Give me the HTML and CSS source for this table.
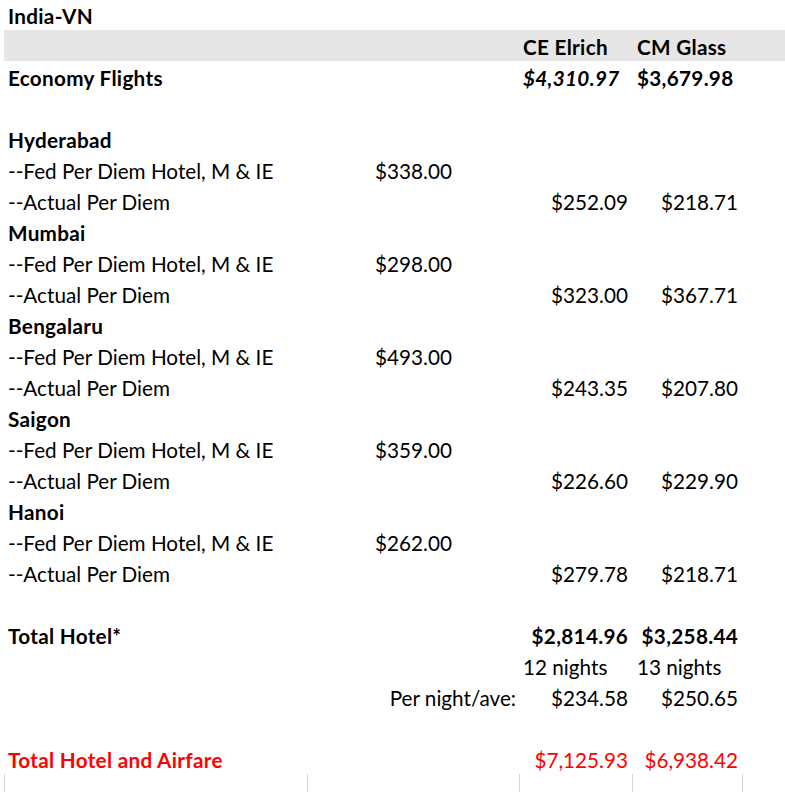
FILE: index.html
```html
<!DOCTYPE html>
<html>
<head>
<meta charset="utf-8">
<link rel="stylesheet" href="styles.css">
</head>
<body>
<div class="sheet">
  <div class="row first"><div class="cell bold">India-VN</div></div>
  <div class="row band"><div class="cell"></div><div class="cell"></div><div class="cell bold">CE Elrich</div><div class="cell bold name2">CM Glass</div></div>
  <div class="row"><div class="cell bold">Economy Flights</div><div class="cell"></div><div class="cell bold italic">$4,310.97</div><div class="cell bold name2">$3,679.98</div></div>
  <div class="row"></div>
  <div class="row"><div class="cell bold">Hyderabad</div></div>
  <div class="row"><div class="cell">--Fed Per Diem Hotel, M &amp; IE</div><div class="cell fed">$338.00</div></div>
  <div class="row"><div class="cell">--Actual Per Diem</div><div class="cell"></div><div class="cell num">$252.09</div><div class="cell num">$218.71</div></div>
  <div class="row"><div class="cell bold">Mumbai</div></div>
  <div class="row"><div class="cell">--Fed Per Diem Hotel, M &amp; IE</div><div class="cell fed">$298.00</div></div>
  <div class="row"><div class="cell">--Actual Per Diem</div><div class="cell"></div><div class="cell num">$323.00</div><div class="cell num">$367.71</div></div>
  <div class="row"><div class="cell bold">Bengalaru</div></div>
  <div class="row"><div class="cell">--Fed Per Diem Hotel, M &amp; IE</div><div class="cell fed">$493.00</div></div>
  <div class="row"><div class="cell">--Actual Per Diem</div><div class="cell"></div><div class="cell num">$243.35</div><div class="cell num">$207.80</div></div>
  <div class="row"><div class="cell bold">Saigon</div></div>
  <div class="row"><div class="cell">--Fed Per Diem Hotel, M &amp; IE</div><div class="cell fed">$359.00</div></div>
  <div class="row"><div class="cell">--Actual Per Diem</div><div class="cell"></div><div class="cell num">$226.60</div><div class="cell num">$229.90</div></div>
  <div class="row"><div class="cell bold">Hanoi</div></div>
  <div class="row"><div class="cell">--Fed Per Diem Hotel, M &amp; IE</div><div class="cell fed">$262.00</div></div>
  <div class="row"><div class="cell">--Actual Per Diem</div><div class="cell"></div><div class="cell num">$279.78</div><div class="cell num">$218.71</div></div>
  <div class="row"></div>
  <div class="row"><div class="cell bold">Total Hotel*</div><div class="cell"></div><div class="cell num bold">$2,814.96</div><div class="cell num bold">$3,258.44</div></div>
  <div class="row"><div class="cell"></div><div class="cell"></div><div class="cell">12 nights</div><div class="cell name2">13 nights</div></div>
  <div class="row"><div class="cell"></div><div class="cell pernight">Per night/ave:</div><div class="cell num">$234.58</div><div class="cell num">$250.65</div></div>
  <div class="row"></div>
  <div class="row red"><div class="cell bold">Total Hotel and Airfare</div><div class="cell"></div><div class="cell num">$7,125.93</div><div class="cell num">$6,938.42</div></div>
  <div class="row grid"><div class="cell"></div><div class="cell"></div><div class="cell"></div><div class="cell"></div><div class="cell"></div></div>
</div>
</body>
</html>
```

FILE: styles.css
```css
html, body {
  margin: 0;
  padding: 0;
  background: #ffffff;
}
body {
  font-family: "Lato", "Open Sans", sans-serif;
  font-size: 20.7px;
  color: #000000;
  overflow: hidden;
}
.sheet {
  margin-left: 4px;
  width: 781px;
}
.row {
  display: grid;
  grid-template-columns: 303px 212px 113px 110px 43px;
  height: 31px;
  align-items: end;
}
.row.first {
  height: 30px;
}
.band {
  background: #e6e6e6;
}
.cell {
  padding: 0 4px 2px 4px;
  white-space: nowrap;
  line-height: 24px;
  min-width: 0;
}
.bold { font-weight: 700; letter-spacing: 0.3px; }
.italic { font-style: italic; }
.name2 { padding-left: 5px; }
.num { text-align: right; padding-right: 4px; }
.fed { text-align: right; padding-right: 67px; }
.pernight { text-align: right; padding-right: 3px; }
.red { color: #ff0000; }
.grid .cell {
  border-left: 1px solid #d4d4d4;
  height: 31px;
  padding: 0;
}
.grid { align-items: stretch; }
```
